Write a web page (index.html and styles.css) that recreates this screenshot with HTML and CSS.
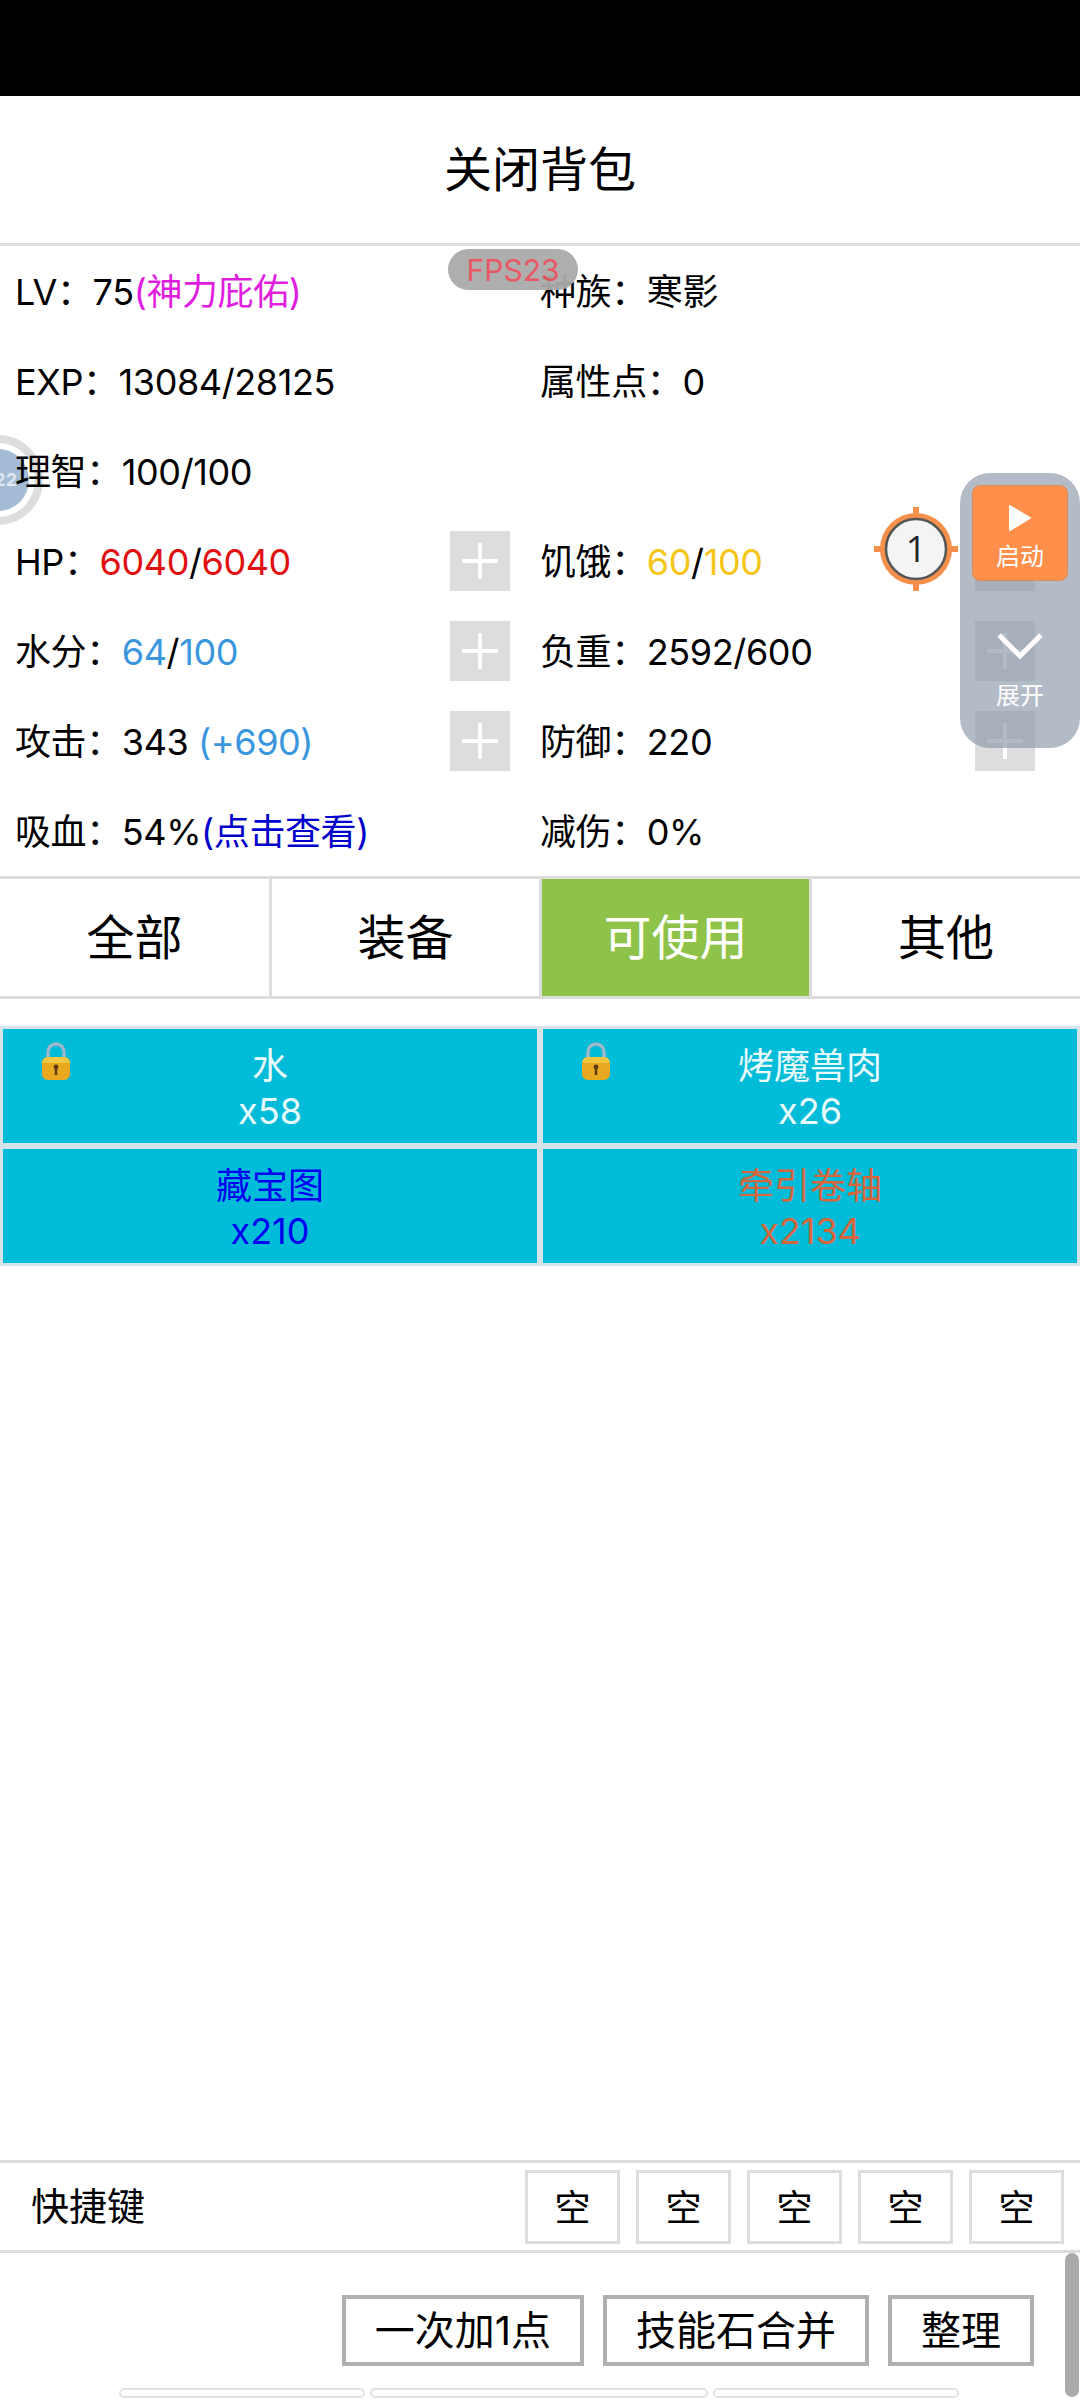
FILE: index.html
```html
<!DOCTYPE html>
<html lang="zh-CN">
<head>
    <meta charset="UTF-8">
    <meta name="viewport" content="width=device-width, initial-scale=1.0">
    <title>背包</title>
    <link rel="stylesheet" href="styles.css">
</head>
<body>
<div id="statusbar"></div>
<div id="title">关闭背包</div>

<div id="stats">
    <div class="row">
        <div class="cell"><span>LV：75<span class="magenta">(神力庇佑)</span></span></div>
        <div class="cell"><span>种族：寒影</span></div>
    </div>
    <div class="row">
        <div class="cell"><span>EXP：13084/28125</span></div>
        <div class="cell"><span>属性点：0</span></div>
    </div>
    <div class="row">
        <div class="cell"><span>理智：100/100</span></div>
        <div class="cell"></div>
    </div>
    <div class="row">
        <div class="cell"><span>HP：<span class="red">6040</span>/<span class="red">6040</span></span><div class="plus"></div></div>
        <div class="cell"><span>饥饿：<span class="yellow">60</span>/<span class="yellow">100</span></span><div class="plus"></div></div>
    </div>
    <div class="row">
        <div class="cell"><span>水分：<span class="blue">64</span>/<span class="blue">100</span></span><div class="plus"></div></div>
        <div class="cell"><span>负重：2592/600</span><div class="plus"></div></div>
    </div>
    <div class="row">
        <div class="cell"><span>攻击：343 <span class="blue">(+690)</span></span><div class="plus"></div></div>
        <div class="cell"><span>防御：220</span><div class="plus"></div></div>
    </div>
    <div class="row">
        <div class="cell"><span>吸血：54%<span class="navy">(点击查看)</span></span></div>
        <div class="cell"><span>减伤：0%</span></div>
    </div>
</div>

<div id="tabs">
    <div class="tab">全部</div>
    <div class="tab">装备</div>
    <div class="tab active">可使用</div>
    <div class="tab">其他</div>
</div>

<div id="items">
    <div class="item">
        <svg class="lock" viewBox="0 0 28 38"><path d="M6 17V10a8 8 0 0 1 16 0v7" fill="none" stroke="#9db6cc" stroke-width="3.5"/><rect x="0" y="15" width="28" height="23" rx="6" fill="#e8a820"/><path d="M0 21a6 6 0 0 1 6-6h16a6 6 0 0 1 6 6z" fill="#f2c640"/><circle cx="14" cy="25" r="2.4" fill="#5a3a10"/><rect x="12.8" y="25" width="2.4" height="8" fill="#5a3a10"/></svg>
        <div>水</div>
        <div>x58</div>
    </div>
    <div class="item">
        <svg class="lock" viewBox="0 0 28 38"><path d="M6 17V10a8 8 0 0 1 16 0v7" fill="none" stroke="#9db6cc" stroke-width="3.5"/><rect x="0" y="15" width="28" height="23" rx="6" fill="#e8a820"/><path d="M0 21a6 6 0 0 1 6-6h16a6 6 0 0 1 6 6z" fill="#f2c640"/><circle cx="14" cy="25" r="2.4" fill="#5a3a10"/><rect x="12.8" y="25" width="2.4" height="8" fill="#5a3a10"/></svg>
        <div>烤魔兽肉</div>
        <div>x26</div>
    </div>
    <div class="item item-blue">
        <div>藏宝图</div>
        <div>x210</div>
    </div>
    <div class="item item-orange">
        <div>牵引卷轴</div>
        <div>x2134</div>
    </div>
</div>

<div id="spacer"></div>

<div id="shortcuts">
    <div class="shortcut-label">快捷键</div>
    <div class="keys">
        <div class="key">空</div>
        <div class="key">空</div>
        <div class="key">空</div>
        <div class="key">空</div>
        <div class="key">空</div>
    </div>
</div>

<div id="actions">
    <div class="buttons">
        <div class="btn">一次加1点</div>
        <div class="btn">技能石合并</div>
        <div class="btn">整理</div>
    </div>
    <div class="slivers">
        <div class="sliver s1"></div>
        <div class="sliver s2"></div>
        <div class="sliver s3"></div>
    </div>
    <div class="scrollbar"></div>
</div>

<!-- floating stuff over the page -->
<div id="fps">FPS23</div>

<div id="ball"><div class="ball-inner">22</div></div>

<svg id="target" viewBox="0 0 84 84">
    <path d="M42 1v12M42 71v12M1 42h12M71 42h12" stroke="#f58f4c" stroke-width="6" stroke-linecap="round"/>
    <circle cx="42" cy="42" r="36" fill="#f58f4c"/>
    <circle cx="42" cy="42" r="30" fill="#f4f4f5" stroke="#555" stroke-width="2.5"/>
</svg>
<div id="target-num">1</div>

<div id="panel">
    <div class="start">
        <svg class="play" viewBox="0 0 24 28"><path d="M2 2l20 12L2 26z" fill="#fff" stroke="#fff" stroke-width="2" stroke-linejoin="round"/></svg>
        <span>启动</span>
    </div>
    <svg class="chevron" viewBox="0 0 48 30"><path d="M3 4l21 21L45 4" fill="none" stroke="#fff" stroke-width="5"/></svg>
    <span class="expand">展开</span>
</div>
</body>
</html>
```

FILE: styles.css
```css
body {
    margin: 0;
    width: 1080px;
    height: 2400px;
    position: relative;
    overflow: hidden;
    display: flex;
    flex-direction: column;
    background-color: #fff;
    color: #000;
    font-family: Inter, "Noto Sans CJK SC", sans-serif;
    font-size: 36px;
}

#statusbar {
    height: 96px;
    background-color: #000;
}

#title {
    height: 147px;
    line-height: 147px;
    text-align: center;
    font-size: 48px;
    border-bottom: 3px solid #ddd;
}

.row {
    display: flex;
    height: 90px;
}

#stats {
    height: 630px;
    border-bottom: 3px solid #ddd;
}

.cell {
    flex: 0 0 525px;
    box-sizing: border-box;
    display: flex;
    align-items: center;
    justify-content: space-between;
    padding: 0 15px;
}

.cell:last-child {
    flex: 0 0 555px;
    padding-right: 45px;
}

.cell > span {
    margin-bottom: 5px;
    letter-spacing: -0.4px;
}

.plus {
    width: 60px;
    height: 60px;
    position: relative;
    background-color: #ddd;
}

.plus::before,
.plus::after {
    content: "";
    position: absolute;
    background-color: #fff;
}

.plus::before {
    left: 12px;
    top: 28px;
    width: 36px;
    height: 4px;
}

.plus::after {
    left: 28px;
    top: 12px;
    width: 4px;
    height: 36px;
}

.magenta { color: #e01ee0; }
.red { color: #e01010; }
.yellow { color: #f5c518; }
.blue { color: #3a96dd; }
.navy { color: #0000cc; }

#tabs {
    display: flex;
    height: 117px;
    border-bottom: 3px solid #ddd;
}

.tab {
    box-sizing: border-box;
    width: 270px;
    line-height: 117px;
    text-align: center;
    font-size: 48px;
    border-right: 3px solid #ddd;
}

.tab:first-child {
    width: 272px;
}

.tab:last-child {
    width: 268px;
    border-right: none;
}

.tab.active {
    background-color: #8ec249;
    color: #fff;
}

#items {
    display: grid;
    grid-template-columns: 540px 540px;
    grid-auto-rows: 120px;
    margin-top: 27px;
}

.item {
    box-sizing: border-box;
    position: relative;
    padding-top: 15px;
    border: 3px solid #d4e4e8;
    background-color: #00bcd8;
    color: #e8fafc;
    text-align: center;
    line-height: 45px;
}

.item-blue { color: #0000f0; }
.item-orange { color: #d8663c; }

.lock {
    position: absolute;
    left: 39px;
    top: 13px;
    width: 28px;
    height: 38px;
}

#spacer {
    flex: 1;
}

#shortcuts {
    height: 87px;
    display: flex;
    align-items: center;
    justify-content: space-between;
    border-top: 3px solid #ddd;
    border-bottom: 3px solid #ddd;
    padding: 0 16px 0 31px;
}

.shortcut-label {
    font-size: 38px;
    margin-bottom: 6px;
}

.keys {
    display: flex;
    gap: 16px;
}

.key {
    box-sizing: border-box;
    width: 95px;
    height: 74px;
    line-height: 70px;
    text-align: center;
    border: 3px solid #ddd;
}

#actions {
    height: 147px;
    position: relative;
}

.buttons {
    display: flex;
    justify-content: flex-end;
    gap: 19px;
    padding: 42px 46px 0 0;
}

.btn {
    box-sizing: border-box;
    height: 71px;
    line-height: 63px;
    padding: 0 29px;
    border: 4px solid #b0b0b0;
    font-size: 40px;
}

.slivers {
    display: flex;
    gap: 5px;
    margin: 22px 0 0 119px;
}

.sliver {
    box-sizing: border-box;
    height: 10px;
    border: 2px solid #e2e2e2;
    border-radius: 5px;
}

.s1 { width: 246px; }
.s2 { width: 338px; }
.s3 { width: 246px; }

.scrollbar {
    position: absolute;
    right: 1px;
    top: 0;
    width: 14px;
    height: 144px;
    border-radius: 7px;
    background-color: #aaa;
}

#fps {
    position: absolute;
    left: 448px;
    top: 249px;
    width: 130px;
    height: 41px;
    border-radius: 21px;
    background-color: #aaa;
    color: #e8505b;
    font-size: 30px;
    line-height: 43px;
    text-align: center;
    opacity: 0.95;
}

#ball {
    position: absolute;
    left: -47px;
    top: 435px;
    width: 90px;
    height: 90px;
    box-sizing: border-box;
    border: 8px solid #ddd;
    border-radius: 50%;
    padding: 6px;
    z-index: -1;
}

.ball-inner {
    height: 62px;
    padding-right: 12px;
    border-radius: 50%;
    background-color: #a5bcd6;
    color: #dfe6ee;
    font-size: 18px;
    font-weight: bold;
    line-height: 62px;
    text-align: right;
}

#target {
    position: absolute;
    left: 874px;
    top: 507px;
    width: 84px;
    height: 84px;
}

#target-num {
    position: absolute;
    left: 874px;
    top: 507px;
    width: 84px;
    line-height: 84px;
    text-align: center;
    color: #222;
    font-family: "Open Sans", sans-serif;
    font-size: 36px;
}

#panel {
    position: absolute;
    left: 960px;
    top: 473px;
    width: 120px;
    height: 275px;
    box-sizing: border-box;
    padding-top: 12px;
    display: flex;
    flex-direction: column;
    align-items: center;
    border-radius: 30px;
    background-color: rgba(140, 152, 170, 0.66);
    color: #fff;
    font-size: 24px;
}

.start {
    box-sizing: border-box;
    width: 96px;
    height: 96px;
    padding-top: 18px;
    display: flex;
    flex-direction: column;
    align-items: center;
    gap: 10px;
    border: 1px solid #d88a58;
    border-radius: 8px;
    background-color: #ff8f4a;
    line-height: 30px;
}

.play {
    width: 24px;
    height: 28px;
}

.chevron {
    width: 48px;
    height: 30px;
    margin-top: 50px;
}

.expand {
    margin-top: 19px;
    line-height: 32px;
}
```
